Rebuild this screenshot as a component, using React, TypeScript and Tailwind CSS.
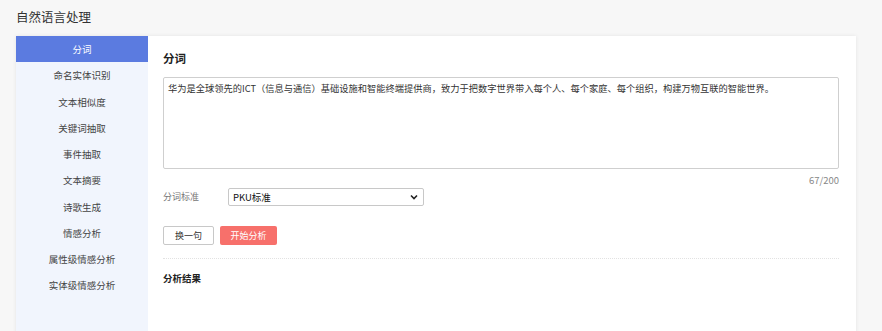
const menu = [
  "分词",
  "命名实体识别",
  "文本相似度",
  "关键词抽取",
  "事件抽取",
  "文本摘要",
  "诗歌生成",
  "情感分析",
  "属性级情感分析",
  "实体级情感分析",
];

const sample =
  "华为是全球领先的ICT（信息与通信）基础设施和智能终端提供商，致力于把数字世界带入每个人、每个家庭、每个组织，构建万物互联的智能世界。";

export default function App() {
  return (
    <div
      className="h-[331px] overflow-hidden bg-[#f7f7f7] text-[#333]"
      style={{ fontFamily: '"Noto Sans CJK SC", "Noto Sans", sans-serif' }}
    >
      <div className="flex h-[36px] items-center pl-[16px] pb-[1px] text-[12.5px] text-[#333]">
        自然语言处理
      </div>
      <div className="ml-[16px] flex h-[300px] w-[840px] bg-white shadow-[0_0_4px_rgba(0,0,0,0.08)]">
        <aside className="w-[132px] shrink-0 bg-[#f1f5fd]">
          <ul>
            {menu.map((item, i) => (
              <li
                key={item}
                className={
                  "flex h-[26.25px] items-center justify-center text-[9.5px] " +
                  (i === 0 ? "bg-[#5b7be0] text-white" : "text-[#444]")
                }
              >
                {item}
              </li>
            ))}
          </ul>
        </aside>
        <main className="flex-1 pl-[15px] pr-[17px] pt-[14px]">
          <h2 className="text-[11.5px] font-bold leading-[16px] text-[#222]">分词</h2>
          <textarea
            defaultValue={sample}
            className="mt-[11px] block h-[92px] w-full resize-none rounded-[2px] border border-[#cfcfcf] px-[4px] py-[3px] text-[9.25px] leading-[14px] text-[#333] outline-none"
            style={{ fontFamily: '"Noto Sans CJK SC", sans-serif' }}
          />
          <div className="mt-[5px] text-right text-[9.5px] leading-[12px] text-[#888]">67/200</div>
          <div className="mt-[2px] flex items-center">
            <span className="w-[65px] text-[9px] text-[#777]">分词标准</span>
            <div className="flex h-[18px] w-[196px] items-center justify-between rounded-[2px] border border-[#c8c8c8] pl-[4px] pr-[5px] text-[9.5px] text-[#111]">
              <span>PKU标准</span>
              <svg width="8" height="6" viewBox="0 0 8 6">
                <path d="M1 1.5 L4 4.5 L7 1.5" fill="none" stroke="#222" strokeWidth="1.6" />
              </svg>
            </div>
          </div>
          <div className="mt-[20px] flex gap-[6px]">
            <button className="h-[19px] w-[51px] rounded-[2px] border border-[#c8c8c8] bg-white text-[9px] text-[#333]">
              换一句
            </button>
            <button className="h-[19px] w-[57px] rounded-[2px] bg-[#f7706b] text-[9px] text-white">
              开始分析
            </button>
          </div>
          <div className="mt-[13px] border-t border-dotted border-[#e2e2e2]" />
          <h3 className="mt-[12px] text-[9.5px] font-bold text-[#222]">分析结果</h3>
        </main>
      </div>
    </div>
  );
}
